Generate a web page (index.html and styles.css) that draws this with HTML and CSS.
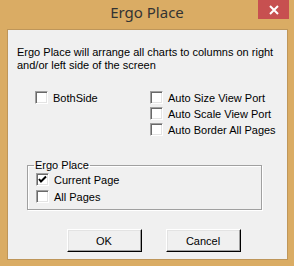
FILE: index.html
```html
<!DOCTYPE html>
<html lang="en">
  <head>
    <meta charset="UTF-8">
    <title>Ergo Place</title>
    <link rel="stylesheet" href="styles.css">
  </head>
  <body>
    <div class="window">
      <div class="titlebar">
        <span class="title">Ergo Place</span>
        <span class="close">
          <svg width="10" height="10" viewBox="0 0 10 10"><path d="M1 1 L9 9 M9 1 L1 9" stroke="#fff" stroke-width="2"/></svg>
        </span>
      </div>

      <div class="client">
        <p class="intro">Ergo Place will arrange all charts to columns on right<br>and/or left side of the screen</p>

        <div class="options">
          <div class="col col-left">
            <label class="check"><span class="box"></span>BothSide</label>
          </div>
          <div class="col col-right">
            <label class="check"><span class="box"></span>Auto Size View Port</label>
            <label class="check"><span class="box"></span>Auto Scale View Port</label>
            <label class="check"><span class="box"></span>Auto Border All Pages</label>
          </div>
        </div>

        <fieldset class="group">
          <legend>Ergo Place</legend>
          <label class="check"><span class="box checked">
            <svg width="9" height="9" viewBox="0 0 9 9"><path d="M1 4 L3 6.5 L8 1.5" stroke="#000" stroke-width="2" fill="none"/></svg>
          </span>Current Page</label>
          <label class="check"><span class="box"></span>All Pages</label>
        </fieldset>

        <div class="buttons">
          <button class="btn">OK</button>
          <button class="btn">Cancel</button>
        </div>
      </div>
    </div>
  </body>
</html>
```

FILE: styles.css
```css
/* Page */
body {
    margin: 0;
    font-family: 'Liberation Sans', Arial, sans-serif;
    font-size: 11px;
    color: #000;
}

/* Window frame */
.window {
    width: 294px;
    height: 266px;
    box-sizing: border-box;
    background: rgb(218, 172, 100);
    display: flex;
    flex-direction: column;
}

.titlebar {
    position: relative;
    height: 29px;
    display: flex;
    justify-content: center;
    align-items: center;
}

.title {
    font-family: 'Noto Sans', 'Open Sans', sans-serif;
    font-size: 15px;
    color: #333;
    margin-top: -5px;
}

.close {
    position: absolute;
    top: 0;
    right: 5px;
    width: 31px;
    height: 19px;
    background: rgb(199, 80, 80);
    display: flex;
    justify-content: center;
    align-items: center;
}

/* Client area */
.client {
    flex: 1;
    margin: 0 6px 6px 7px;
    background: #f0f0f0;
    border: 1px solid rgb(190, 150, 90);
    padding: 0 9px;
}

.intro {
    margin: 16px 0 0;
    line-height: 13px;
}

.options {
    display: flex;
    margin-top: 19px;
}

.col {
    display: flex;
    flex-direction: column;
    gap: 3px;
}

.col-left {
    width: 115px;
    padding-left: 18px;
}

/* Checkboxes */
.check {
    display: flex;
    align-items: center;
    height: 13px;
}

.box {
    width: 13px;
    height: 13px;
    box-sizing: border-box;
    background: #fff;
    border-top: 1px solid #a0a0a0;
    border-left: 1px solid #a0a0a0;
    border-right: 1px solid #fff;
    border-bottom: 1px solid #fff;
    box-shadow: inset 1px 1px 0 #696969, inset -1px -1px 0 #e3e3e3;
    margin-right: 5px;
    display: flex;
    justify-content: center;
    align-items: center;
}

/* Group box */
.group {
    margin: 23px 16px 0 10px;
    padding: 2px 0 6px 8px;
    border: 1px solid #a0a0a0;
    box-shadow: 1px 1px 0 #fff, inset 1px 1px 0 #fff;
    display: flex;
    flex-direction: column;
    gap: 4px;
}

.group legend {
    padding: 0 1px;
    margin-left: -2px;
}

/* Buttons */
.buttons {
    display: flex;
    justify-content: center;
    gap: 24px;
    margin-top: 19px;
    padding-left: 12px;
}

.btn {
    width: 75px;
    height: 23px;
    font-family: 'Liberation Sans', Arial, sans-serif;
    font-size: 11px;
    color: #000;
    background: #f0f0f0;
    border: 1px solid;
    border-color: #fff #000 #000 #fff;
    box-shadow: inset -1px -1px 0 #a0a0a0, inset 1px 1px 0 #e3e3e3;
    padding: 0;
}
```
